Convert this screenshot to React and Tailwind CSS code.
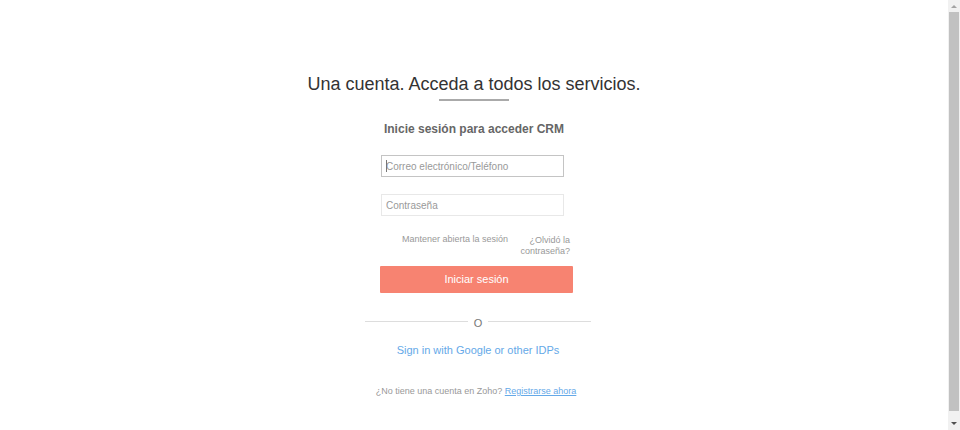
function Field({ id, label, type, className, caret }) {
  return (
    <div className="relative">
      <label htmlFor={id} className="sr-only">{label}</label>
      <input
        id={id}
        type={type}
        placeholder={label}
        className={`block h-[22px] w-full border bg-white px-1 text-[10px] leading-5 text-[#555] outline-none placeholder:text-[#999] ${className}`}
      />
      {caret && <span aria-hidden="true" className="absolute top-[5px] left-[5px] h-3 w-px bg-[#777]" />}
    </div>
  );
}

function Scrollbar() {
  return (
    <div aria-hidden="true" className="flex w-3 shrink-0 flex-col items-center bg-[#f1f1f1]">
      <svg className="h-3 w-3 shrink-0" viewBox="0 0 12 12"><path d="M3 8 6 5l3 3z" fill="#a3a3a3" /></svg>
      <div className="w-[10px] grow bg-[#c1c1c1]" />
      <svg className="mt-[7px] h-3 w-3 shrink-0" viewBox="0 0 12 12"><path d="M3 4h6L6 7z" fill="#505050" /></svg>
    </div>
  );
}

export default function App() {
  return (
    <div className="flex min-h-screen bg-white font-['Liberation_Sans',Arial,sans-serif]">
      <main className="flex grow flex-col items-center pt-[72px]">
        <h1 className="text-[18px] leading-6 text-[#333]">Una cuenta. Acceda a todos los servicios.</h1>
        <div className="mt-[3px] h-[2px] w-[70px] bg-[#aaa]" />
        <h2 className="mt-5 text-[12px] leading-4 font-bold text-[#666]">Inicie sesión para acceder CRM</h2>

        <div className="ml-2 w-[226px]">
          <form className="mt-[18px] pr-[18px] pl-[15px]" onSubmit={(e) => e.preventDefault()}>
            <div className="flex flex-col gap-[17px] pr-[9px] pl-px">
              <Field id="login" type="text" label="Correo electrónico/Teléfono" className="border-[#c4c4c4]" caret />
              <Field id="password" type="password" label="Contraseña" className="border-[#e8e8e8]" />
            </div>
            <div className="mt-[18px] flex justify-end gap-2 pr-[3px] text-[9px] leading-[11px] text-[#999]">
              <label className="whitespace-nowrap">
                <input type="checkbox" className="sr-only" />
                Mantener abierta la sesión
              </label>
              <a href="#recuperar" className="w-[54px] pt-px text-right">¿Olvidó la contraseña?</a>
            </div>
            <button type="submit" className="mt-[9px] block h-[27px] w-full rounded-[1px] bg-[#f78371] text-[11px] text-white">
              Iniciar sesión
            </button>
          </form>

          <div className="mt-5 flex h-4 items-center gap-[6px] text-[11px] leading-4 text-[#777]">
            <span className="h-px grow bg-[#ddd]" />
            <span className="pt-[3px]">O</span>
            <span className="h-px grow bg-[#ddd]" />
          </div>
          <a href="#idp" className="mt-[13px] block text-center text-[11px] leading-4 text-[#65a9e8]">
            Sign in with Google or other IDPs
          </a>
        </div>

        <p className="mt-[27px] ml-1 text-[9px] leading-3 text-[#999]">
          ¿No tiene una cuenta en Zoho?{" "}
          <a href="#registro" className="text-[#65a9e8] underline">Registrarse ahora</a>
        </p>
      </main>
      <Scrollbar />
    </div>
  );
}
